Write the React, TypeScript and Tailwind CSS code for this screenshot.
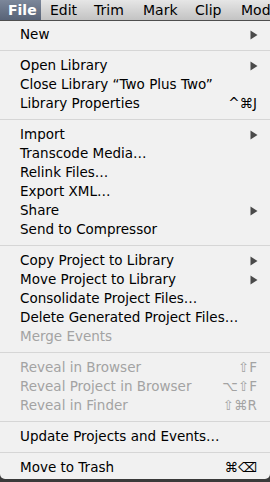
import React from "react";

type Item =
  | { kind: "sep" }
  | { kind: "item"; label: string; sub?: boolean; shortcut?: string; disabled?: boolean };

const items: Item[] = [
  { kind: "item", label: "New", sub: true },
  { kind: "sep" },
  { kind: "item", label: "Open Library", sub: true },
  { kind: "item", label: "Close Library \u201CTwo Plus Two\u201D" },
  { kind: "item", label: "Library Properties", shortcut: "^\u2318J" },
  { kind: "sep" },
  { kind: "item", label: "Import", sub: true },
  { kind: "item", label: "Transcode Media\u2026" },
  { kind: "item", label: "Relink Files\u2026" },
  { kind: "item", label: "Export XML\u2026" },
  { kind: "item", label: "Share", sub: true },
  { kind: "item", label: "Send to Compressor" },
  { kind: "sep" },
  { kind: "item", label: "Copy Project to Library", sub: true },
  { kind: "item", label: "Move Project to Library", sub: true },
  { kind: "item", label: "Consolidate Project Files\u2026" },
  { kind: "item", label: "Delete Generated Project Files\u2026" },
  { kind: "item", label: "Merge Events", disabled: true },
  { kind: "sep" },
  { kind: "item", label: "Reveal in Browser", shortcut: "\u21E7F", disabled: true },
  { kind: "item", label: "Reveal Project in Browser", shortcut: "\u2325\u21E7F", disabled: true },
  { kind: "item", label: "Reveal in Finder", shortcut: "\u21E7\u2318R", disabled: true },
  { kind: "sep" },
  { kind: "item", label: "Update Projects and Events\u2026" },
  { kind: "sep" },
  { kind: "item", label: "Move to Trash", shortcut: "\u2318\u232B" },
];

function Arrow() {
  return (
    <svg width="8" height="10" viewBox="0 0 8 10" className="block">
      <polygon points="0.5,0.5 7.5,5 0.5,9.5" fill="#4a4a4a" />
    </svg>
  );
}

export default function App() {
  const menus = [
    { l: "File", w: "w-[41px]", pl: "pl-[8px]" },
    { l: "Edit", w: "w-[44px]", pl: "pl-[9px]" },
    { l: "Trim", w: "w-[49px]", pl: "pl-[9px]" },
    { l: "Mark", w: "w-[52px]", pl: "pl-[9px]" },
    { l: "Clip", w: "w-[45px]", pl: "pl-[9px]" },
    { l: "Mod", w: "w-[39px]", pl: "pl-[10px]" },
  ];
  return (
    <div
      className="w-[270px] h-[482px] bg-[#3a3a3a] overflow-hidden"
      style={{ fontFamily: '"DejaVu Sans", "Liberation Sans", sans-serif' }}
    >
      <div className="h-[20px] flex bg-gradient-to-b from-[#e6e6e6] to-[#c3c3c3] border-b border-[#4e4e4e] box-content">
        {menus.map((m, i) => (
          <div
            key={m.l}
            className={`${m.w} ${m.pl} shrink-0 flex items-center text-[14px] whitespace-nowrap ${
              i === 0
                ? "bg-gradient-to-b from-[#7c879a] to-[#586377] text-white font-bold"
                : "text-black"
            }`}
          >
            {m.l}
          </div>
        ))}
      </div>
      <div className="bg-[#f1f1f1] rounded-b-[5px] pt-[4px] pb-[2px]">
        {items.map((it, i) =>
          it.kind === "sep" ? (
            <div key={i} className="h-[12px] flex items-center">
              <div className="w-full h-px bg-[#d6d6d6]" />
            </div>
          ) : (
            <div
              key={i}
              className={`h-[19px] flex items-center pl-[20px] pr-[12px] text-[13.5px] whitespace-nowrap ${
                it.disabled ? "text-[#a3a3a3]" : "text-black"
              }`}
            >
              <span className="flex-1">{it.label}</span>
              {it.sub && <Arrow />}
              {it.shortcut && <span className="pr-[1px]">{it.shortcut}</span>}
            </div>
          )
        )}
      </div>
    </div>
  );
}
